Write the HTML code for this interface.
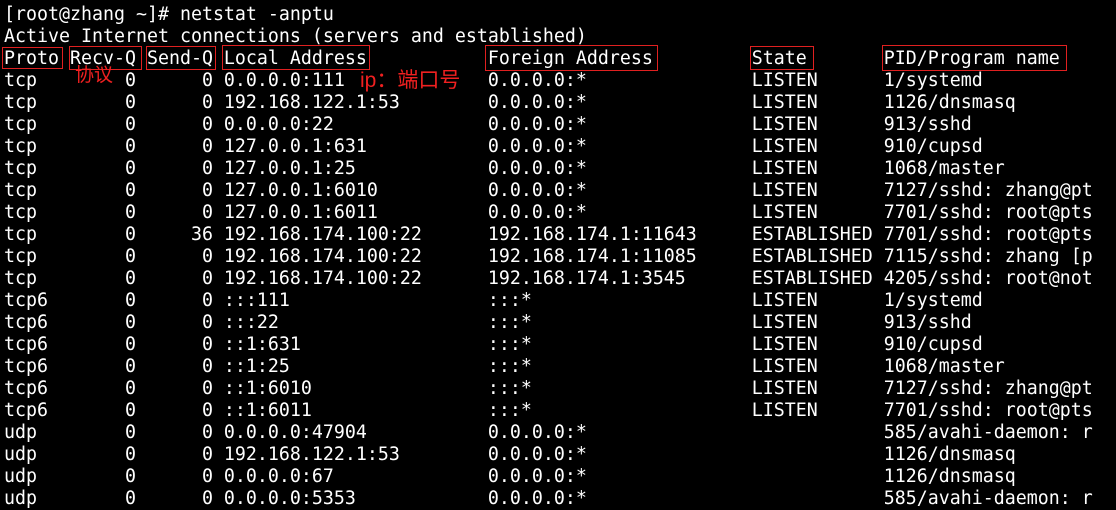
<!DOCTYPE html>
<html><head><meta charset="utf-8"><style>
body{margin:0;background:#000;width:1116px;height:510px;overflow:hidden;position:relative}
pre{position:absolute;left:4px;top:4px;margin:0;color:#fff;font-family:"DejaVu Sans Mono","Liberation Mono",monospace;font-size:18.27px;line-height:22px}
.b{position:absolute;border:1.5px solid #e02020;box-sizing:border-box}
.r{position:absolute;color:#f02020;font-family:"Liberation Sans","Noto Sans CJK SC",sans-serif;line-height:22px}
</style></head><body>
<pre>[root@zhang ~]# netstat -anptu
Active Internet connections (servers and established)
Proto Recv-Q Send-Q Local Address           Foreign Address         State       PID/Program name    
tcp        0      0 0.0.0.0:111             0.0.0.0:*               LISTEN      1/systemd
tcp        0      0 192.168.122.1:53        0.0.0.0:*               LISTEN      1126/dnsmasq
tcp        0      0 0.0.0.0:22              0.0.0.0:*               LISTEN      913/sshd
tcp        0      0 127.0.0.1:631           0.0.0.0:*               LISTEN      910/cupsd
tcp        0      0 127.0.0.1:25            0.0.0.0:*               LISTEN      1068/master
tcp        0      0 127.0.0.1:6010          0.0.0.0:*               LISTEN      7127/sshd: zhang@pt
tcp        0      0 127.0.0.1:6011          0.0.0.0:*               LISTEN      7701/sshd: root@pts
tcp        0     36 192.168.174.100:22      192.168.174.1:11643     ESTABLISHED 7701/sshd: root@pts
tcp        0      0 192.168.174.100:22      192.168.174.1:11085     ESTABLISHED 7115/sshd: zhang [p
tcp        0      0 192.168.174.100:22      192.168.174.1:3545      ESTABLISHED 4205/sshd: root@not
tcp6       0      0 :::111                  :::*                    LISTEN      1/systemd
tcp6       0      0 :::22                   :::*                    LISTEN      913/sshd
tcp6       0      0 ::1:631                 :::*                    LISTEN      910/cupsd
tcp6       0      0 ::1:25                  :::*                    LISTEN      1068/master
tcp6       0      0 ::1:6010                :::*                    LISTEN      7127/sshd: zhang@pt
tcp6       0      0 ::1:6011                :::*                    LISTEN      7701/sshd: root@pts
udp        0      0 0.0.0.0:47904           0.0.0.0:*                           585/avahi-daemon: r
udp        0      0 192.168.122.1:53        0.0.0.0:*                           1126/dnsmasq
udp        0      0 0.0.0.0:67              0.0.0.0:*                           1126/dnsmasq
udp        0      0 0.0.0.0:5353            0.0.0.0:*                           585/avahi-daemon: r</pre>
<div class="b" style="left:2px;top:47px;width:61px;height:22px"></div>
<div class="b" style="left:69px;top:46px;width:73px;height:24px"></div>
<div class="b" style="left:146px;top:46px;width:70px;height:24px"></div>
<div class="b" style="left:222px;top:45px;width:148px;height:25px"></div>
<div class="b" style="left:485px;top:45px;width:173px;height:26px"></div>
<div class="b" style="left:750px;top:46px;width:64px;height:24px"></div>
<div class="b" style="left:882px;top:45px;width:185px;height:26px"></div>
<div class="r" style="left:75px;top:65px;font-size:19px">协议</div>
<div class="r" style="left:360px;top:70px;font-size:21px">ip：端口号</div>
</body></html>
